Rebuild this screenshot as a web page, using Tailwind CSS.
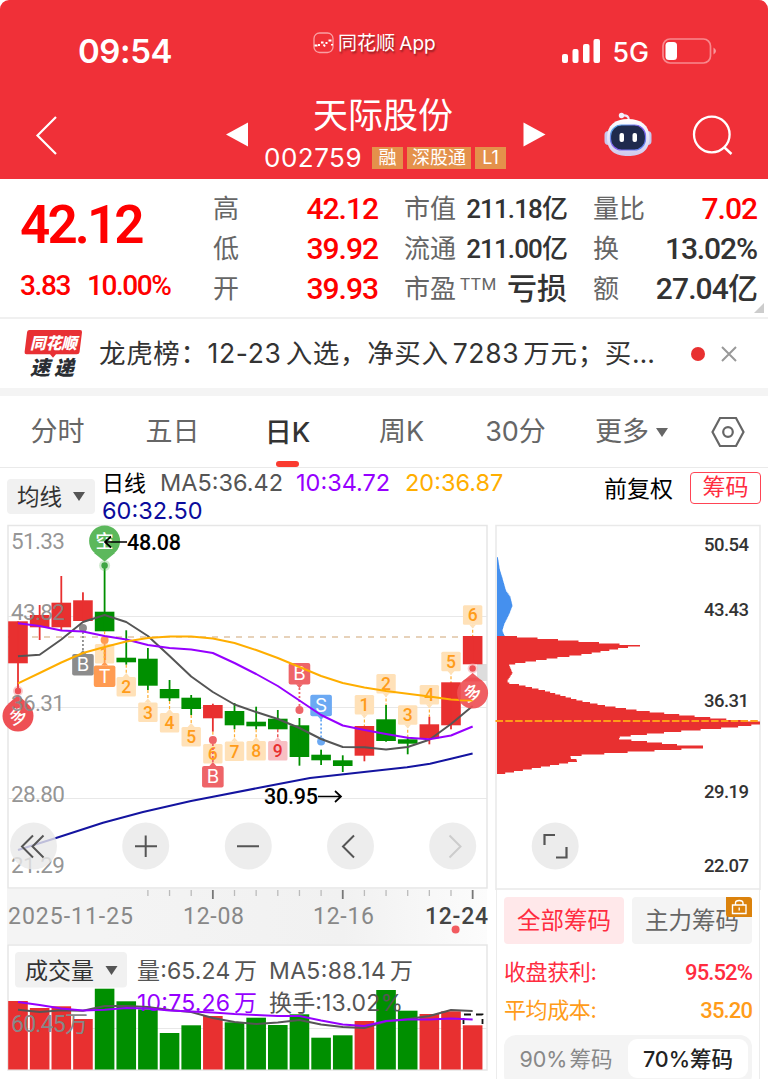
<!DOCTYPE html>
<html lang="zh-CN">
<head>
  <meta charset="UTF-8" />
  <meta name="viewport" content="width=device-width, initial-scale=1.0"/>
  <title>天际股份 002759</title>
  <script src="https://cdn.jsdelivr.net/npm/@tailwindcss/browser@4"></script>
  <style>
    body { font-family: 'Inter', 'Noto Sans CJK SC', sans-serif; }
    .num { font-family: 'Roboto', 'Noto Sans CJK SC', sans-serif; font-stretch: 88%; }
  </style>
</head>
<body class="w-[768px] h-[1079px] overflow-hidden bg-white text-[#333] whitespace-nowrap">

  <!-- Header -->
  <header class="h-[179px] bg-[#f03038] rounded-t-[9px] text-white flex flex-col">
    <div class="h-[92px] flex items-start">
      <div class="w-[313px] pl-[78px] pt-[35px] text-[33px] leading-[33px] font-semibold tracking-[-0.4px]">09:54</div>
      <div class="w-[248px] pt-[32px] flex gap-[4px]">
        <svg class="w-[21px] h-[22px]" viewBox="0 0 21 22" fill="none">
          <rect x="1" y="1" width="19" height="19.500" rx="5.500" stroke="#f9a0a4" stroke-width="1.300"/>
          <path d="M1.500 13.500h3M6 14v-2M8 10.500h2.500M10.500 12.500l1.500 2M13.500 10v2M15.500 8.500h3M19 12v1.500" stroke="#fff" stroke-width="2"/>
        </svg>
        <span class="text-[19px] leading-[24px] [word-spacing:-1px] [text-shadow:1px_2px_2px_rgba(0,0,0,0.4)]">同花顺 App</span>
      </div>
      <svg class="w-[160px] h-[36px] mt-[33px]" viewBox="561 33 160 36">
        <g fill="#fff">
          <rect x="562" y="54" width="6" height="9" rx="2"/>
          <rect x="572.500" y="49" width="6" height="14" rx="2"/>
          <rect x="583" y="44" width="6.500" height="19" rx="2"/>
          <rect x="593.500" y="39" width="6.500" height="24" rx="2"/>
          <rect x="665.500" y="42" width="11.500" height="18" rx="3.500"/>
          <path d="M713.500 47.500q5 3.500 0 7z" opacity=".5"/>
        </g>
        <rect x="663" y="39" width="47.500" height="24" rx="7" fill="none" stroke="#f8898e" stroke-width="1.700"/>
        <text x="612.500" y="61.500" font-size="26.500" font-weight="500" fill="#fff" textLength="36.500" lengthAdjust="spacingAndGlyphs">5G</text>
      </svg>
    </div>
    <div class="h-[87px] flex">
      <svg class="w-[264px] h-[87px]" viewBox="0 92 264 87">
        <path d="M56 117L37.500 135.500 56 154" fill="none" stroke="#fff" stroke-width="2.200"/>
        <path d="M226 134.500l22-12v24z" fill="#fff"/>
      </svg>
      <div class="w-[244px] flex flex-col">
        <h1 class="text-[35px] leading-[44px] pl-[49px] pt-[1px] font-normal">天际股份</h1>
        <div class="flex items-center gap-[4px] h-[28px] mt-[7px]">
          <span class="text-[26px] leading-[28px] w-[104px] tracking-[0.5px]">002759</span>
          <span class="w-[31px] h-[22px] bg-[#e4914b] text-[18px] leading-[21px] text-center">融</span>
          <span class="w-[64px] h-[22px] bg-[#e4914b] text-[18px] leading-[21px] text-center">深股通</span>
          <span class="w-[31px] h-[22px] bg-[#e4914b] text-[18px] leading-[21px] text-center">L1</span>
        </div>
      </div>
      <svg class="w-[260px] h-[87px]" viewBox="508 92 260 87">
        <defs>
          <linearGradient id="shell" x1="0" y1="0" x2="0" y2="1">
            <stop offset="0" stop-color="#fff"/><stop offset="1" stop-color="#cfcaee"/>
          </linearGradient>
          <linearGradient id="visor" x1="0" y1="0" x2="1" y2="1">
            <stop offset="0" stop-color="#4ab8e8"/><stop offset=".5" stop-color="#8a5cf0"/><stop offset="1" stop-color="#5a8cf0"/>
          </linearGradient>
        </defs>
        <path d="M523.500 122.500l22 12-22 12z" fill="#fff"/>
        <path d="M622 115.500q7-1 7 5" fill="none" stroke="#eee8f8" stroke-width="2.200"/>
        <circle cx="621.500" cy="115.500" r="2.700" fill="#f4eefa"/>
        <rect x="604.500" y="131" width="9" height="14" rx="4" fill="#c8c8ee"/>
        <rect x="642.500" y="131" width="9" height="14" rx="4" fill="#c8c8ee"/>
        <path d="M607 138C607 125 615 119 628 119s21.500 6 21.500 19-9 18-21.500 18S607 151 607 138z" fill="url(#shell)"/>
        <rect x="610.500" y="125" width="35" height="25" rx="11" fill="#1f2a4d" stroke="url(#visor)" stroke-width="1.200"/>
        <rect x="619.500" y="133" width="4.500" height="9" rx="2" fill="#fff"/>
        <rect x="632.500" y="133" width="4.500" height="9" rx="2" fill="#fff"/>
        <circle cx="711.800" cy="134.500" r="17.800" fill="none" stroke="#fff" stroke-width="2.300"/>
        <path d="M724.500 147.500l7 6.500" stroke="#fff" stroke-width="2.400"/>
      </svg>
    </div>
  </header>

  <!-- Quote -->
  <section class="h-[140px] border-b-2 border-[#f0f0f0] flex num relative">
    <div class="w-[213px] pl-[20px] text-[#f00] font-medium">
      <div class="text-[53px] leading-[60px] pt-[16px] tracking-[-2.9px] font-semibold">42.12</div>
      <div class="flex gap-[17px] text-[28px] leading-[32px] pt-[15px] tracking-[-1.4px]"><span>3.83</span><span>10.00%</span></div>
    </div>
    <div class="w-[165px] pt-[9px] text-[26px] text-[#666]">
      <div class="h-[40px] flex items-center justify-between"><span class="pt-[3px]">高</span><b class="text-[#f00] font-medium text-[30px] tracking-[-1px]">42.12</b></div>
      <div class="h-[40px] flex items-center justify-between"><span class="pt-[3px]">低</span><b class="text-[#f00] font-medium text-[30px] tracking-[-1px]">39.92</b></div>
      <div class="h-[40px] flex items-center justify-between"><span class="pt-[3px]">开</span><b class="text-[#f00] font-medium text-[30px] tracking-[-1px]">39.93</b></div>
    </div>
    <div class="w-[189px] pl-[26px] pt-[9px] text-[26px] text-[#666]">
      <div class="h-[40px] flex items-center justify-between"><span class="pt-[3px]">市值</span><b class="text-[#333] font-medium text-[26px] tracking-[-0.9px] pt-[2px]">211.18亿</b></div>
      <div class="h-[40px] flex items-center justify-between"><span class="pt-[3px]">流通</span><b class="text-[#333] font-medium text-[26px] tracking-[-0.9px] pt-[2px]">211.00亿</b></div>
      <div class="h-[40px] flex items-center justify-between"><span class="flex pt-[3px]">市盈<i class="not-italic text-[17px] leading-[28px] pl-[4px] tracking-[0.5px]">TTM</i></span><b class="text-[#333] font-medium text-[30px]">亏损</b></div>
    </div>
    <div class="w-[190px] pl-[26px] pt-[9px] text-[26px] text-[#666]">
      <div class="h-[40px] flex items-center justify-between"><span class="pt-[3px]">量比</span><b class="text-[#f00] font-medium text-[30px] tracking-[-1px]">7.02</b></div>
      <div class="h-[40px] flex items-center justify-between"><span class="pt-[3px]">换</span><b class="text-[#333] font-medium text-[30px] tracking-[-1.1px]">13.02%</b></div>
      <div class="h-[40px] flex items-center justify-between"><span class="pt-[3px]">额</span><b class="text-[#333] font-medium text-[30px] tracking-[-0.9px]">27.04亿</b></div>
    </div>
    <svg class="absolute right-[4px] bottom-[4px] w-[10px] h-[10px]" viewBox="0 0 10 10"><path d="M10 0v10H0z" fill="#ccc"/></svg>
  </section>

  <!-- News ticker -->
  <section class="h-[69px] flex items-center">
    <svg class="w-[99px] h-[60px]" viewBox="0 323 99 60">
      <path d="M29.500 329H80q2.300 0 2 2.300l-2.500 20q-.3 2-2.500 2H56l-3 3.500-3-3.500H26.500q-2.200 0-1.900-2.200l2.500-20q.3-2.100 2.400-2.100z" fill="#e83034"/>
      <g font-weight="900" font-style="italic">
        <text x="30" y="347.500" font-size="16" fill="#fff" textLength="47" lengthAdjust="spacingAndGlyphs">同花顺</text>
        <text x="30" y="373.500" font-size="20" fill="#2a2e33" textLength="44">速递</text>
      </g>
    </svg>
    <p class="w-[592px] text-[26.5px] tracking-[0.65px] [word-spacing:-4px]">龙虎榜：12-23 入选，净买入 7283 万元；买…</p>
    <span class="size-[14px] rounded-full bg-[#e83030]"></span>
    <svg class="w-[16px] h-[16px] ml-[16px]" viewBox="0 0 16 16"><path d="M1 1l14 14M15 1L1 15" stroke="#999" stroke-width="2"/></svg>
  </section>
  <div class="h-[8px] bg-[#f4f4f4]"></div>

  <!-- Period tabs -->
  <nav class="h-[72px] flex items-center border-b border-[#eaeaea] text-[27px] text-[#666] text-center">
    <span class="w-[115px] pt-[2px]">分时</span>
    <span class="w-[115px] pt-[2px]">五日</span>
    <span class="w-[115px] h-full relative text-[#333] font-medium leading-[74px]">日K<i class="absolute left-[46px] bottom-0 w-[23px] h-[6px] rounded-full bg-[#fa3b30]"></i></span>
    <span class="w-[113px] pt-[2px]">周K</span>
    <span class="w-[115px] pt-[2px]">30分</span>
    <span class="w-[117px] flex items-center justify-center gap-[7px] pt-[2px]">更多<svg class="w-[12px] h-[9px]" viewBox="0 0 12 9"><path d="M0 0h12L6 9z" fill="#666"/></svg></span>
    <svg class="w-[34px] h-[32px] ml-[21px]" viewBox="0 0 34 32" fill="none" stroke="#666" stroke-width="2.200">
      <path d="M9 2h16l7.500 14-7.500 14H9L1.500 16z"/><circle cx="17" cy="16" r="4.800"/>
    </svg>
  </nav>

  <!-- Moving average legend -->
  <section class="h-[56px] flex pl-[7px]">
    <div class="w-[88px] h-[35px] mt-[11px] rounded-[4px] bg-[#f1f1f1] flex items-center pl-[10px] gap-[11px] text-[22.5px]">均线<svg class="w-[12px] h-[9px]" viewBox="0 0 12 9"><path d="M0 0h12L6 9z" fill="#555"/></svg></div>
    <div class="w-[509px] pl-[7px] text-[23.5px] leading-[28px] pt-[1px]">
      <div class="flex gap-[14px]"><span class="text-black text-[22px]">日线</span><span class="text-[#555] w-[122px]">MA5:36.42</span><span class="text-[#9600ff] w-[95px]">10:34.72</span><span class="text-[#ffae00]">20:36.87</span></div>
      <div class="text-[#0c0c9c]">60:32.50</div>
    </div>
    <div class="w-[86px] pt-[5px] text-[23px] leading-[33px] text-black">前复权</div>
    <div class="w-[71px] h-[32px] mt-[4px] border-[1.5px] border-[#ff4455] rounded-[4px] text-[#ff2c3f] text-[23px] leading-[29px] text-center">筹码</div>
  </section>

  <main class="h-[555px] flex">
    <!-- Candles, date axis and volume -->
    <div class="w-[490px]">
      <svg id="kline" class="num w-[490px] h-[420px]" viewBox="0 524 490 420">
        <defs>
          <linearGradient id="axisBg" x1="0" x2="1"><stop offset=".2" stop-color="#f4f4f4"/><stop offset=".7" stop-color="#f1f1f1"/><stop offset="1" stop-color="#fcfcfc"/></linearGradient>
        </defs>
        <path d="M8 616.500H487M8 707.500H487M8 798.500H487" stroke="#e8e8e8" stroke-width="1"/>
        <path d="M8 888V525.500H487V888z" fill="none" stroke="#e6e6e6" stroke-width="1.500"/>
        <path d="M8 637H487" stroke="#dfc4a4" stroke-width="1.500" stroke-dasharray="6 6"/>
        <rect x="477" y="664" width="10" height="17" fill="#ddd"/>
        <g id="candles"></g>
        <g id="tags"></g>
        <g id="marks"></g>
        <g id="averages" fill="none" stroke-width="2" stroke-linejoin="round"></g>
        <g id="pins"></g>
        <g font-size="22.500" fill="#888" fill-opacity=".9">
          <text x="11" y="548.500" textLength="54">51.33</text>
          <text x="11" y="619.500" textLength="54">43.82</text>
          <text x="11" y="710.500" textLength="54">36.31</text>
          <text x="11" y="801.500" textLength="54">28.80</text>
          <text x="11" y="873" textLength="54">21.29</text>
        </g>
        <g font-size="21.500" font-weight="500" fill="#000">
          <text x="127" y="550" textLength="54">48.08</text>
          <text x="264" y="804" textLength="54">30.95</text>
        </g>
        <path d="M127 542H106M111 536.500l-6 5.500 6 5.500M318 796.500h22M335 791l6 5.500-6 5.500" fill="none" stroke="#000" stroke-width="1.700"/>
        <g fill="#e9e9e9" fill-opacity=".8">
          <circle cx="33.500" cy="846" r="23.500"/><circle cx="145.700" cy="846" r="23.500"/><circle cx="248.300" cy="846" r="23.500"/><circle cx="350.500" cy="846" r="23.500"/><circle cx="452.700" cy="846" r="23.500"/>
        </g>
        <g fill="none" stroke="#555" stroke-width="2">
          <path d="M33 835.500L22 846.500l11 11M43.500 835.500l-11 11 11 11M135 846.300h22M145.700 835.500v21.500M237 846.300h22M354 835.500l-11 11 11 11"/>
          <path d="M449.500 835.500l11 11-11 11" stroke="#ccc"/>
        </g>
        <!-- Date axis -->
        <rect x="7" y="889" width="480" height="55" fill="url(#axisBg)"/>
        <g id="ticks"></g>
        <g font-size="23" fill="#888">
          <text x="8" y="924" textLength="125">2025-11-25</text>
          <text x="183" y="924" textLength="61">12-08</text>
          <text x="313" y="924" textLength="61">12-16</text>
          <text x="425" y="924" textLength="63" fill="#444" font-weight="500">12-24</text>
        </g>
        <circle cx="455.600" cy="929.500" r="4" fill="#f25b60"/>
      </svg>
      <svg id="volume" class="w-[490px] h-[135px]" viewBox="0 944 490 135">
        <path d="M8 1028.500H487" stroke="#e8e8e8" stroke-width="1"/>
        <path d="M8 1070V945H487V1070z" fill="none" stroke="#e6e6e6" stroke-width="1.500"/>
        <g id="volBars"></g>
        <path d="M463.500 1024v-9.500h19V1024" fill="none" stroke="#111" stroke-width="1.800" stroke-dasharray="6 4 7 5 7 4"/>
        <rect x="15" y="952" width="112" height="35.500" rx="4" fill="#f1f1f1"/>
        <path d="M105.500 966h12l-6 9z" fill="#555"/>
        <g font-size="23" fill="#555" word-spacing="-3">
          <text x="25" y="979" fill="#333" textLength="69">成交量</text>
          <text x="137" y="979" textLength="120">量:65.24 万</text>
          <text x="269" y="979" textLength="144">MA5:88.14 万</text>
          <text x="269" y="1010.500" textLength="134">换手:13.02%</text>
          <text x="137" y="1010.500" fill="#9600ff" textLength="120">10:75.26 万</text>
          <text class="num" x="11" y="1032" fill="#888" textLength="77">60.45万</text>
        </g>
        <g id="volAverages" fill="none" stroke-width="2" stroke-linejoin="round"></g>
      </svg>
    </div>

    <!-- Chip distribution -->
    <aside class="w-[278px] flex flex-col">
      <svg class="num w-[278px] h-[366px] shrink-0" viewBox="490 524 278 366">
        <path d="M496 890V525.500H760V890M496 889H760" fill="none" stroke="#e9e9e9" stroke-width="1.500"/>
        <path id="chipLoss" fill="#4590ee"/>
        <path id="chipGain" fill="#e83030"/>
        <path d="M495.500 721H760" stroke="#ff9c1a" stroke-width="2" stroke-dasharray="7.500 2.300"/>
        <g font-size="18.500" font-weight="500" fill="#333">
          <text x="704" y="550.500" textLength="45">50.54</text>
          <text x="704" y="616.300" textLength="45">43.43</text>
          <text x="704" y="707.300" textLength="45">36.31</text>
          <text x="704" y="798.300" textLength="45">29.19</text>
          <text x="704" y="871.500" textLength="45">22.07</text>
        </g>
        <circle cx="555.200" cy="846" r="23.500" fill="#ececec"/>
        <path d="M544.500 845v-10h10.500M566.500 847v10.500H556" fill="none" stroke="#555" stroke-width="2.200"/>
      </svg>
      <div class="ml-[6px] w-[264px] h-[189px] border-x border-[#ececec] px-[7px] pt-[7px]">
        <div class="flex gap-[8px] text-[23.5px] leading-[48px] text-center">
          <span class="w-[121px] h-[47px] rounded-[4px] bg-[#ffe8ea] text-[#ff2c3f]">全部筹码</span>
          <span class="w-[121px] h-[47px] rounded-[4px] bg-[#f4f4f4] text-[#666] relative">主力筹码
            <svg class="absolute right-0 top-0 w-[26px] h-[20px]" viewBox="0 0 26 20">
              <path d="M0 0h23q3 0 3 3v17H3q-3 0-3-3z" fill="#db820c"/>
              <path d="M6.500 8h13.500v8.500H6.500zM9.500 8V6q0-2.500 3.700-2.500T17 6v2M13.200 10.500v3" fill="none" stroke="#fff" stroke-width="1.400"/>
            </svg>
          </span>
        </div>
        <div class="flex justify-between items-center h-[37px] mt-[10px] text-[22px] text-[#ff2c3f]"><span class="tracking-[-0.4px]">收盘获利:</span><b class="num font-medium tracking-[-0.9px]">95.52%</b></div>
        <div class="flex justify-between items-center h-[38px] text-[22px] text-[#ff9c1a]"><span class="tracking-[-0.4px]">平均成本:</span><b class="num font-medium tracking-[-0.9px]">35.20</b></div>
        <div class="mt-[6px] h-[52px] rounded-[12px] bg-[#f4f4f4] flex pt-[4px] pr-[4px] text-[21.5px] leading-[40px] text-center">
          <span class="w-[125px] text-[#888] [word-spacing:-4px]">90% 筹码</span>
          <span class="w-[121px] h-[39px] rounded-[9px] bg-white text-[#222] font-medium">70%筹码</span>
        </div>
      </div>
    </aside>
  </main>

  <script>
    const RED = '#e83030';
    const GREEN = '#008f00';
    const x = i => 18 + i * 21.65;
    const put = (id, html) => { document.getElementById(id).innerHTML = html; };

    // [rising, body top, body bottom, wick top, wick bottom, volume top]
    const days = [
      [1, 621.3, 663.3, 621.3, 690, 1001], [1, 615, 627.3, 605, 640, 1008], [1, 602.7, 627.3, 576, 630, 1006.3],
      [1, 600.3, 621, 592.3, 621, 1019], [0, 611.7, 631.3, 565, 631.3, 988.7], [0, 657.7, 662.3, 630.3, 664.7, 1001.3],
      [0, 658.7, 685.7, 648, 690, 1009.3], [0, 689, 698.3, 680, 701, 1033], [0, 697.7, 709, 695, 715, 1025.3],
      [1, 705, 718.3, 703.7, 731.7, 1016], [0, 711, 725.3, 703, 729.3, 1022.3], [0, 721.7, 726.3, 706.7, 729.3, 1017.7],
      [0, 718.7, 729.3, 710, 729.3, 1025], [0, 725.3, 757, 718, 765.7, 1014.3], [0, 754.7, 760.3, 749.7, 765, 1037.7],
      [0, 760.3, 766, 755.3, 772, 1035.3], [1, 726, 755.7, 726, 761.3, 1021], [0, 719.3, 741, 705, 741.7, 990],
      [0, 739.3, 743.7, 736.7, 754.3, 1010.7], [1, 724.3, 738.3, 716.7, 744.3, 1014], [1, 682.3, 725.3, 682.3, 729.3, 1011.3],
      [1, 636, 664.3, 636, 664.3, 1025.3]
    ];
    put('candles', days.map(([up, t, b, wt, wb], i) => {
      const c = up ? RED : GREEN;
      return `<rect x="${x(i) - 9.8}" y="${t}" width="19.6" height="${b - t}" fill="${c}"/><rect x="${x(i) - 0.9}" y="${wt}" width="1.8" height="${wb - wt}" fill="${c}"/>`;
    }).join(''));
    put('volBars', days.map((d, i) =>
      `<rect x="${x(i) - 9.8}" y="${d[5]}" width="19.6" height="${1069.5 - d[5]}" fill="${d[0] ? RED : GREEN}"/>`).join(''));

    const line = (ys, color) => `<polyline points="${ys.map((y, i) => x(i) + ',' + y).join(' ')}" stroke="${color}"/>`;
    put('averages',
      '<polyline points="18,850 56,838 103,822.7 143,812 191,801 213,796.7 263,787 310,778 364,772 407,767.3 430,763.7 451,758.8 472.6,753.5" stroke="#1414a0"/>' +
      line([656.3, 654.7, 639.5, 622, 615, 622, 636, 656, 676.5, 692, 704.5, 712, 719, 728, 739, 747, 747.3, 749.5, 747, 739.7, 724, 706], '#555') +
      line([623.3, 626, 630.5, 631.5, 636, 639.5, 645, 648, 649.5, 653, 663, 674, 686, 700.5, 715, 725.5, 730, 734, 737.7, 739.3, 735.5, 726.5], '#9600ff') +
      line([683.3, 673, 662.5, 653, 647, 641.5, 638, 636.5, 636.5, 638.5, 643, 650, 658, 667, 676, 683, 687.5, 691, 693.7, 696.5, 699.5, 700.7], '#ffae00'));
    put('volAverages',
      line([1009.7, 1012, 1010.3, 1010.7, 1006, 1006, 1007, 1010, 1012, 1018, 1022, 1024, 1022.5, 1020, 1024.5, 1027, 1028, 1021.5, 1019, 1016, 1010, 1011], '#555') +
      line([1002, 1005, 1008.5, 1010.5, 1009.7, 1008, 1008.5, 1010.5, 1011.5, 1012.5, 1014, 1015, 1016, 1016, 1020.5, 1024.5, 1026, 1021, 1019.5, 1019.5, 1018.5, 1019.5], '#9600ff'));

    // Sequence counts: [day, label, box top, side of the candle]
    const tags = [
      [4, 1, 644, 'below'], [5, 2, 677, 'below'], [6, 3, 702.5, 'below'], [7, 4, 713, 'below'], [8, 5, 727, 'below'],
      [9, 6, 744, 'below'], [10, 7, 741.5, 'below'], [11, 8, 741, 'below'], [12, 9, 741, 'below'],
      [16, 1, 695, 'above'], [17, 2, 674, 'above'], [18, 3, 705.3, 'above'], [19, 4, 685, 'above'], [20, 5, 651.7, 'above'], [21, 6, 605.3, 'above']
    ];
    put('tags', tags.map(([i, n, y, side]) => {
      const hot = n === 9;
      const below = side === 'below';
      const from = below ? days[i][4] : y + 19.5;
      const to = below ? y : days[i][3];
      const tip = below ? `M${x(i) - 3.5} ${y}l3.500 -4 3.500 4z` : `M${x(i) - 3.5} ${y + 19.3}l3.500 4 3.500 -4z`;
      return `<path d="M${x(i)} ${from}V${to}" stroke="${hot ? RED : '#ffae33'}" stroke-width="1.200" stroke-dasharray="3 2"/>
        <path d="${tip}" fill="${hot ? '#f8bfc3' : '#ffe1b8'}"/>
        <rect x="${x(i) - 9.7}" y="${y}" width="19.400" height="19.500" rx="1.500" fill="${hot ? '#f8bfc3' : '#ffe1b8'}"/>
        <text x="${x(i)}" y="${y + 16}" text-anchor="middle" font-size="17.500" font-weight="500" fill="${hot ? RED : '#ff9c1a'}">${n}</text>`;
    }).join(''));

    // Trade marks: [day, letter, box top, dot y, colour]
    const marks = [
      [3, 'B', 654, 628, '#8c8c8c'], [4, 'T', 665.5, 640, '#ff9b52'], [9, 'B', 766, 740, '#ee6468'],
      [13, 'B', 663, 710, '#ee6468'], [14, 'S', 694.7, 741.5, '#6ba9f3']
    ];
    put('marks', marks.map(([i, s, y, dot, c]) => {
      const below = dot < y;
      const tip = below ? `M${x(i) - 3.5} ${y}l3.500 -4 3.500 4z` : `M${x(i) - 3.5} ${y + 21.3}l3.500 4 3.500 -4z`;
      return `<path d="M${x(i)} ${dot}V${below ? y : y + 21}" stroke="${c}" stroke-width="1.800" stroke-dasharray="2 2"/>
        <circle cx="${x(i)}" cy="${dot}" r="4" fill="${c}"/><path d="${tip}" fill="${c}"/>
        <rect x="${x(i) - 10.8}" y="${y}" width="21.600" height="21.500" rx="2" fill="${c}"/>
        <text x="${x(i)}" y="${y + 17.3}" text-anchor="middle" font-family="Inter" font-size="19" fill="#fff">${s}</text>`;
    }).join(''));

    put('pins', `
      <circle cx="104.600" cy="565.500" r="5.500" fill="#5cb85c" opacity=".3"/><circle cx="104.600" cy="565.500" r="3.200" fill="#3fa544"/>
      <path d="M94 553l10.600 8.500L115 553z" fill="#5cb85c"/><circle cx="104.600" cy="541" r="15.500" fill="#5cb85c"/>
      <text x="104.600" y="547.500" text-anchor="middle" font-size="18" font-weight="500" fill="#fff">空</text>
      <circle cx="18" cy="691" r="5" fill="#ee5055" opacity=".3"/><circle cx="18" cy="691" r="3.200" fill="#ee5055"/>
      <path d="M8 704l10-9 10 9z" fill="#ee5055"/><circle cx="18" cy="716" r="15.500" fill="#ee5055"/>
      <text x="18" y="722.500" text-anchor="middle" font-size="18" font-weight="500" fill="#fff" transform="rotate(-20 18 716)">多</text>
      <circle cx="472.600" cy="668.500" r="5" fill="#f7b0b2" opacity=".6"/><circle cx="472.600" cy="668.500" r="3.200" fill="#ee5055"/>
      <g fill="#ee5055" fill-opacity=".92"><path d="M462.500 681.500l10.100-8.500 10.100 8.500z"/><circle cx="472.600" cy="693" r="15.500"/></g>
      <text x="472.600" y="699.500" text-anchor="middle" font-size="18" font-weight="500" fill="#fff" transform="rotate(-20 472.600 693)">多</text>
      <path d="M460 700.300L472.600 700.700" stroke="#ffae00" stroke-width="1.800"/>`);

    put('ticks', days.map((_, i) => {
      if (i < 6) return '';
      const major = [9, 15, 21].includes(i);
      return `<path d="M${x(i)} 890v${major ? 9 : 6}" stroke="${major ? '#777' : '#bbb'}" stroke-width="${major ? 1.8 : 1.3}"/>`;
    }).join(''));

    // Chip profile, [y, width] key points drawn as 1.5px steps
    function profile(points) {
      let d = `M497 ${points[0][0]}`;
      for (let y = points[0][0]; y < points[points.length - 1][0]; y += 1.5) {
        const k = points.findIndex(p => p[0] > y);
        const [y0, w0] = points[k - 1];
        const [y1, w1] = points[k];
        d += `H${(497 + w0 + (w1 - w0) * (y - y0) / (y1 - y0)).toFixed(1)}v1.5`;
      }
      return d + 'H497z';
    }
    document.getElementById('chipLoss').setAttribute('d', profile([
      [557.3, 1], [568.3, 2.7], [578.3, 5.7], [590, 9], [596, 13.3], [605, 15.5], [613.3, 12.3], [623.3, 7.3], [630, 5.3], [636, 8]
    ]));
    document.getElementById('chipGain').setAttribute('d', profile([
      [636, 20], [645, 143], [647, 127], [653.3, 90], [657.3, 58], [662.7, 20], [664, 12], [672.3, 15.5], [680, 10.3],
      [682.3, 11], [684, 22], [690, 48], [695, 65], [700, 83], [705, 108], [710, 143], [713.3, 175], [716.7, 210],
      [719.5, 240], [721.5, 263], [723.5, 263], [726.7, 235], [730, 190], [733.3, 152], [736, 123], [738.3, 122], [741, 150],
      [744, 180], [745.5, 206], [747.3, 206], [749.3, 170], [751.7, 127], [755, 77], [756.7, 71], [760, 83], [762.7, 67], [768.3, 33],
      [772.7, 7], [774, 0]
    ]));
  </script>
</body>
</html>
